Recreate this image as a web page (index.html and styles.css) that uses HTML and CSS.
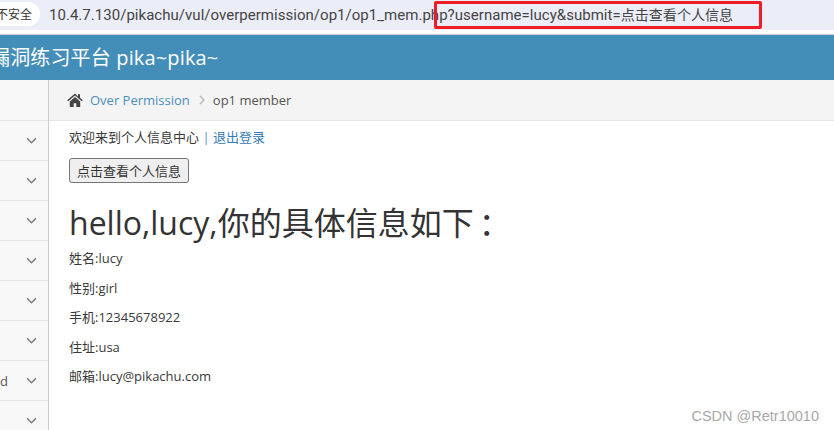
FILE: index.html
```html
<!DOCTYPE html>
<html lang="zh-CN">
<head>
<meta charset="UTF-8">
<title>op1 member</title>
<link rel="stylesheet" href="styles.css">
</head>
<body>

<div class="addressbar">
  <span class="badge">不安全</span>
  <span class="url">10.4.7.130/pikachu/vul/overpermission/op1/op1_mem.php?username=lucy&amp;submit=<span class="url-cn">点击查看个人信息</span></span>
  <div class="mark"></div>
</div>

<div class="navbar"><span class="brand">漏洞练习平台 pika~pika~</span></div>

<div class="main">
  <div class="sidebar">
    <div class="side-top"></div>
    <div class="side-item"><svg class="chev" viewBox="0 0 10 6"><path d="M1 1l4 4 4-4"/></svg></div>
    <div class="side-item"><svg class="chev" viewBox="0 0 10 6"><path d="M1 1l4 4 4-4"/></svg></div>
    <div class="side-item"><svg class="chev" viewBox="0 0 10 6"><path d="M1 1l4 4 4-4"/></svg></div>
    <div class="side-item"><svg class="chev" viewBox="0 0 10 6"><path d="M1 1l4 4 4-4"/></svg></div>
    <div class="side-item"><svg class="chev" viewBox="0 0 10 6"><path d="M1 1l4 4 4-4"/></svg></div>
    <div class="side-item"><svg class="chev" viewBox="0 0 10 6"><path d="M1 1l4 4 4-4"/></svg></div>
    <div class="side-item"><span class="side-label">d</span><svg class="chev" viewBox="0 0 10 6"><path d="M1 1l4 4 4-4"/></svg></div>
    <div class="side-item"><svg class="chev" viewBox="0 0 10 6"><path d="M1 1l4 4 4-4"/></svg></div>
  </div>

  <div class="content">
    <div class="breadcrumb">
      <svg class="home" viewBox="0 0 16 14"><path d="M8 0.6L0.2 7.2l1 1.1L8 2.6l6.8 5.7 1-1.1-2.8-2.4V1.2h-2v2.3zM2.8 8.4V14h3.9v-3.8h2.6V14h3.9V8.4L8 4z"/></svg>
      <a class="crumb-link">Over Permission</a>
      <svg class="crumb-sep" viewBox="0 0 6 10"><path d="M1 1l4 4-4 4"/></svg>
      <span>op1 member</span>
    </div>
    <div class="page">
      <p class="welcome">欢迎来到个人信息中心 <span class="bar">|</span> <a class="logout">退出登录</a></p>
      <button class="show-btn">点击查看个人信息</button>
      <h1>hello,lucy,你的具体信息如下<span class="colon">：</span></h1>
      <p class="info">姓名:lucy</p>
      <p class="info">性别:girl</p>
      <p class="info">手机:12345678922</p>
      <p class="info">住址:usa</p>
      <p class="info">邮箱:lucy@pikachu.com</p>
    </div>
  </div>
</div>

<div class="watermark">CSDN @Retr10010</div>

</body>
</html>
```

FILE: styles.css
```css
html, body {
  margin: 0;
  height: 430px;
  overflow: hidden;
}

body {
  position: relative;
  background: #fff;
  font-family: "Open Sans", "Noto Sans CJK SC", sans-serif;
  font-size: 13px;
  color: #393939;
}

/* browser bar */
.addressbar {
  position: relative;
  display: flex;
  align-items: center;
  box-sizing: border-box;
  height: 30px;
  padding-bottom: 3px;
  background: #ebeef8;
  margin-bottom: 4px;
  white-space: nowrap;
  overflow: hidden;
}

.badge {
  display: flex;
  align-items: center;
  justify-content: flex-end;
  flex-shrink: 0;
  width: 32px;
  height: 24px;
  margin-left: -21px;
  padding: 0 8px 0 21px;
  background: #fff;
  border-radius: 0 12px 12px 0;
  font-size: 12px;
  font-family: "Noto Sans CJK SC", sans-serif;
  color: #333;
  overflow: hidden;
}

.url {
  margin-left: 9px;
  font-size: 15px;
  letter-spacing: 0.03px;
  color: #444;
  font-family: "Roboto", "Noto Sans CJK SC", sans-serif;
}

.url-cn {
  font-size: 14px;
}

.mark {
  position: absolute;
  left: 434px;
  top: 1px;
  width: 322px;
  height: 22px;
  border: 3px solid #ee1c25;
  border-radius: 2px;
}

.navbar {
  height: 45px;
  border-top: 1px solid #ccd;
  background: #438eb9;
  display: flex;
  align-items: center;
  overflow: hidden;
}

.brand {
  margin: 0 0 2px -10px;
  font-size: 20px;
  letter-spacing: 0.15px;
  color: #fff;
  white-space: nowrap;
}

.main {
  display: flex;
  height: 350px;
}

.sidebar {
  width: 48px;
  flex-shrink: 0;
  background: #f8f8f8;
  border-right: 1px solid #ccc;
}

.side-top {
  height: 40px;
  border-bottom: 1px solid #e5e5e5;
}

.side-item {
  position: relative;
  display: flex;
  align-items: center;
  justify-content: flex-end;
  height: 39px;
  padding-right: 11px;
  border-bottom: 1px solid #e5e5e5;
}

.side-label {
  position: absolute;
  left: 0;
  font-size: 13px;
  color: #555;
}

.chev {
  width: 11px;
  height: 7px;
  fill: none;
  stroke: #777;
  stroke-width: 1.3;
}

.content {
  flex: 1;
}

.breadcrumb {
  display: flex;
  align-items: center;
  height: 41px;
  box-sizing: border-box;
  padding-left: 18px;
  background: #f4f4f4;
  border-bottom: 1px solid #e5e5e5;
  font-size: 13px;
  color: #555;
}

.home {
  width: 16px;
  height: 14px;
  fill: #444;
  margin-right: 7px;
}

.crumb-link {
  color: #4c8fbd;
}

.crumb-sep {
  width: 6px;
  height: 10px;
  margin: 0 8px 0 9px;
  fill: none;
  stroke: #b2b6bf;
  stroke-width: 1.4;
}

.page {
  padding: 7px 0 0 20px;
}

.welcome {
  margin: 0 0 12px;
  line-height: 18px;
}

.bar {
  color: #4c8fbd;
}

.logout {
  color: #337ab7;
}

.show-btn {
  display: block;
  height: 25px;
  padding: 0 7px;
  background: #efefef;
  border: 1px solid #767676;
  border-radius: 3px;
  font-family: "Noto Sans CJK SC", sans-serif;
  font-size: 13px;
  color: #333;
}

h1 {
  margin: 19px 0 6px;
  font-size: 32px;
  font-weight: 400;
  line-height: 41px;
  color: #333;
}

.colon {
  margin-left: 5px;
}

.info {
  margin: 0 0 11.6px;
  line-height: 18px;
}

.watermark {
  position: absolute;
  right: 15px;
  bottom: 6px;
  font-family: "Liberation Sans", sans-serif;
  font-size: 14.5px;
  color: #a8a8a8;
}
```
